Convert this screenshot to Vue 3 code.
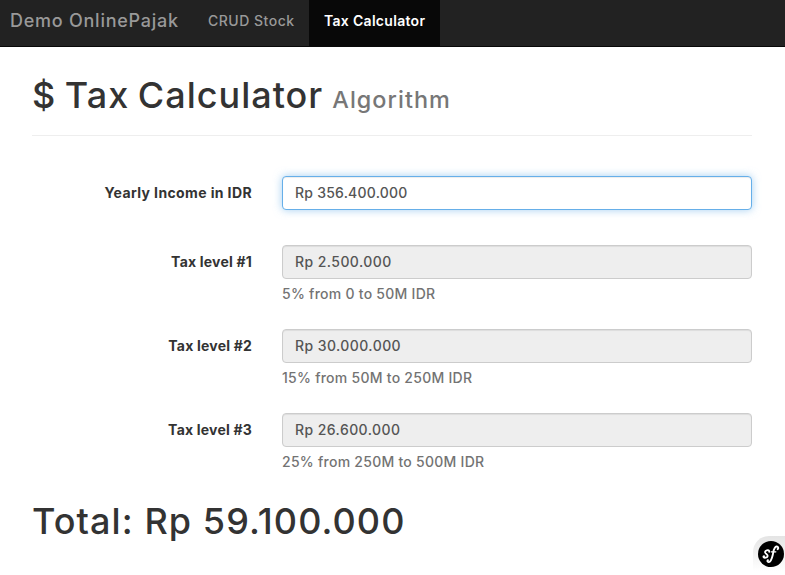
<script setup>
import { ref } from 'vue'

const income = ref('Rp 356.400.000')
const levels = [
  { label: 'Tax level #1', value: 'Rp 2.500.000', help: '5% from 0 to 50M IDR' },
  { label: 'Tax level #2', value: 'Rp 30.000.000', help: '15% from 50M to 250M IDR' },
  { label: 'Tax level #3', value: 'Rp 26.600.000', help: '25% from 250M to 500M IDR' },
]
</script>

<template>
  <div class="page">
    <nav class="navbar">
      <a class="brand">Demo OnlinePajak</a>
      <a class="nav-link">CRUD Stock</a>
      <a class="nav-link active">Tax Calculator</a>
    </nav>
    <main class="container">
      <header class="page-header">
        <h1>$ Tax Calculator</h1>
        <small>Algorithm</small>
      </header>
      <form class="form">
        <div class="row first">
          <label class="income-label">Yearly Income in IDR</label>
          <div class="field">
            <input v-model="income" class="control focused" type="text">
          </div>
        </div>
        <div v-for="level in levels" :key="level.label" class="row">
          <label>{{ level.label }}</label>
          <div class="field">
            <input class="control" type="text" :value="level.value" readonly>
            <p class="help">{{ level.help }}</p>
          </div>
        </div>
      </form>
      <h2 class="total">Total: Rp 59.100.000</h2>
    </main>
    <div class="toolbar">
      <svg width="26" height="26" viewBox="0 0 26 26">
        <circle cx="13" cy="13" r="13" fill="#000" />
        <g fill="none" stroke="#fff" stroke-linecap="round" stroke-linejoin="round">
          <path stroke-width="1.8" d="M11.2 10.8C11.5 9.4 10.2 8.9 8.8 9.3C7 9.8 6.5 11.4 7.7 12.4C8.9 13.4 10.2 13.9 9.6 15.3C9 16.8 6.4 17.2 5.6 16.1C5.2 15.5 5.7 14.9 6.2 15.2" />
          <path stroke-width="1.9" d="M19.6 8.2C20.8 7.6 20.3 5.3 18.5 5.5C15.8 5.8 15.6 10.2 14.8 13.7C13.9 17.6 12.9 20.9 10.8 21.1C9.3 21.2 9 19.5 10 19.3" />
          <path stroke-width="1.3" d="M13.2 10.8H17.8" />
        </g>
      </svg>
    </div>
  </div>
</template>

<style>
body {
  margin: 0;
  background: #fff;
}
</style>

<style scoped>
* {
  box-sizing: border-box;
}
.page {
  position: relative;
  height: 575px;
  overflow: hidden;
  color: #333;
  font: 450 14px/20px Inter, "Liberation Sans", sans-serif;
}
.navbar {
  display: flex;
  height: 47px;
  background: #222;
  border-bottom: 1px solid #080808;
  color: #999;
}
.brand {
  width: 193px;
  padding: 11px 0 0 10px;
  font-size: 18px;
  white-space: nowrap;
  letter-spacing: 0.75px;
}
.nav-link {
  padding: 11px 0 0 15px;
  width: 116px;
  white-space: nowrap;
  letter-spacing: 0.5px;
}
.nav-link.active {
  width: 131px;
  background: #080808;
  color: #fff;
  font-weight: 600;
  letter-spacing: 0.3px;
}
.container {
  padding: 0 33px 0 32px;
}
.page-header {
  display: flex;
  align-items: baseline;
  gap: 9px;
  height: 89px;
  padding-top: 28px;
  border-bottom: 1px solid #eee;
  white-space: nowrap;
}
h1,
.total {
  margin: 0;
  font-size: 36px;
  line-height: 40px;
  font-weight: 450;
  letter-spacing: 1px;
  word-spacing: -2px;
}
small {
  font-size: 23.4px;
  line-height: 24px;
  letter-spacing: 1.05px;
  color: #777;
}
.form {
  padding-top: 40px;
}
.row {
  display: grid;
  grid-template-columns: 220px 470px;
  column-gap: 30px;
  height: 84px;
}
.row.first {
  height: 69px;
}
label {
  padding-top: 7px;
  text-align: right;
  font-weight: 650;
  letter-spacing: 0.2px;
}
.income-label {
  letter-spacing: 0.38px;
}
.control {
  display: block;
  width: 100%;
  height: 34px;
  padding: 5px 12px 7px;
  border: 1px solid #ccc;
  border-radius: 4px;
  background: #eee;
  box-shadow: inset 0 1px 1px rgba(0, 0, 0, 0.075);
  color: #555;
  font: inherit;
  letter-spacing: 0.43px;
  outline: none;
}
.control.focused {
  border-color: #66afe9;
  background: #fff;
  box-shadow: inset 0 1px 1px rgba(0, 0, 0, 0.075), 0 0 8px rgba(102, 175, 233, 0.6);
  letter-spacing: 0.23px;
}
.help {
  margin: 5px 0 0;
  color: #737373;
  letter-spacing: 0.26px;
}
.total {
  margin-top: 4px;
  letter-spacing: 1.08px;
  word-spacing: 0;
}
.toolbar {
  position: absolute;
  right: 0;
  top: 536px;
  width: 32px;
  height: 35px;
  padding: 5px 0 0 5px;
  border-top-left-radius: 16px;
  background: linear-gradient(#e4e4e4, #fff);
}
.toolbar svg {
  display: block;
}
</style>
